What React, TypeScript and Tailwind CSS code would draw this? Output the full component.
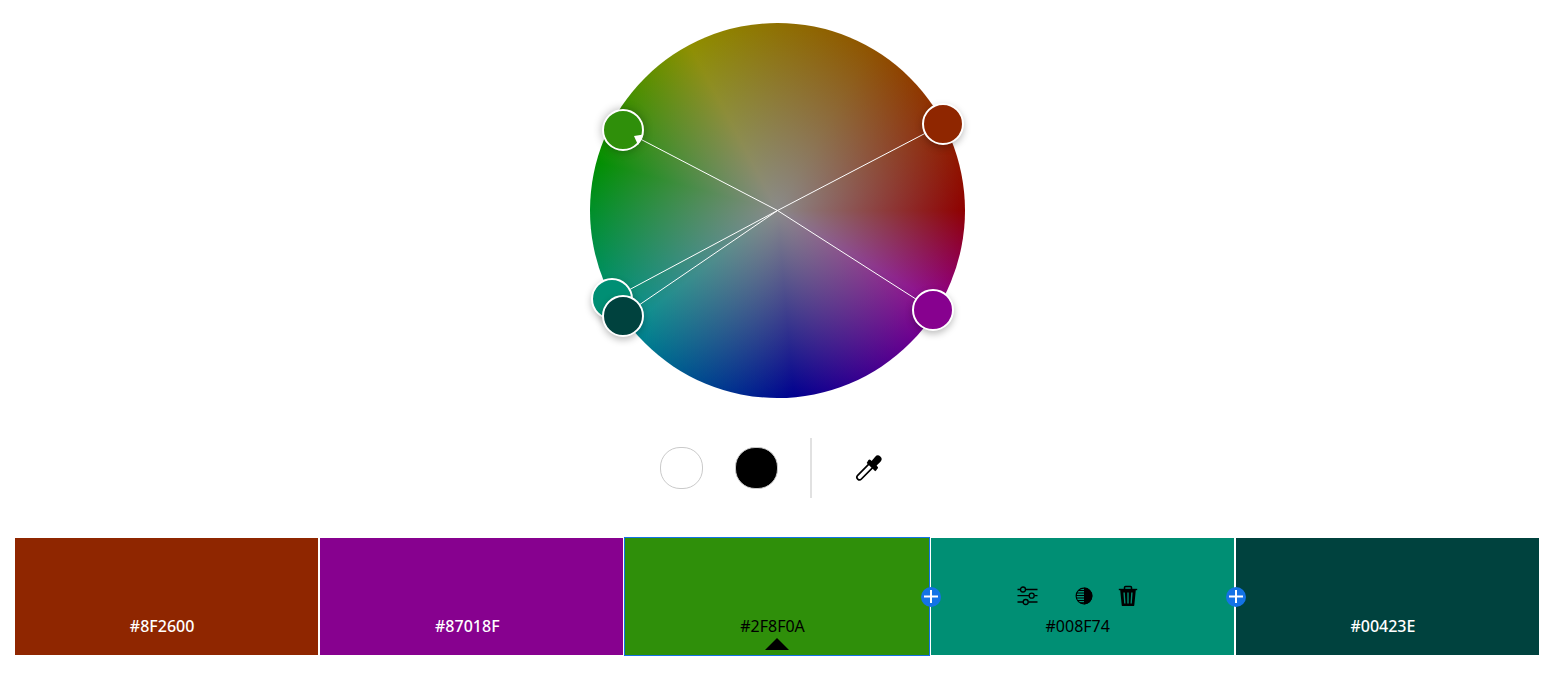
import React, { useState } from "react";

type Marker = {
  hex: string;
  name: string;
  x: number;
  y: number;
};

const WHEEL = 375;
const CENTER = WHEEL / 2;

const markers: Marker[] = [
  { hex: "#8F2600", name: "Rust", x: 353, y: 101 },
  { hex: "#87018F", name: "Purple", x: 343, y: 287 },
  { hex: "#2F8F0A", name: "Green", x: 33, y: 107 },
  { hex: "#008F74", name: "Teal", x: 22, y: 276 },
  { hex: "#00423E", name: "Dark teal", x: 33, y: 293 },
];

function EyedropperIcon() {
  return (
    <svg width="28" height="28" viewBox="0 0 28 28" aria-hidden="true">
      <path
        d="M14.8 9.2 2.7 21.400a2.500 2.500 0 0 0 3.700 3.600L18.400 12.900"
        fill="none"
        stroke="#000"
        strokeWidth="1.7"
        strokeLinejoin="round"
      />
      <path
        d="M13.300 6.200a1.600 1.600 0 0 1 2.300-.3l1 1 3.600-4.200a3.500 3.500 0 0 1 5.300 5L21.600 11.400l1.200 1.600c.8 1-.3 2-1 2.100l.1.700-1.700 1.500-8.500-8.400z"
        fill="#000"
      />
    </svg>
  );
}

function SlidersIcon() {
  return (
    <svg width="22" height="22" viewBox="0 0 22 22" fill="none" stroke="#000" strokeWidth="1.3" aria-hidden="true">
      <path d="M.5 4.500h3M8.500 4.500h12M.5 10.700h11.500M17.500 10.700h3M.5 17h5.500M11.500 17h9" />
      <circle cx="6" cy="4.500" r="2.500" />
      <circle cx="14.700" cy="10.700" r="2.500" />
      <circle cx="8.700" cy="17" r="2.500" />
    </svg>
  );
}

function ShadesIcon() {
  return (
    <svg width="18" height="18" viewBox="0 0 18 18" aria-hidden="true">
      <circle cx="9" cy="9" r="7.9" fill="none" stroke="#000" strokeWidth="1.1" />
      <path d="M9 .6a8.4 8.4 0 0 1 0 16.8z" fill="#000" />
      <path d="M3.5 3.5H9M2 6h7M1 8.5h8M1.2 11H9M2.5 13.5H9M5 15.7h4" stroke="#000" strokeWidth="1" />
    </svg>
  );
}

function TrashIcon() {
  return (
    <svg width="20" height="22" viewBox="0 0 20 22" aria-hidden="true">
      <path d="M6.5 4V2.4c0-.6.4-1 1-1h5c.6 0 1 .4 1 1V4" fill="none" stroke="#000" strokeWidth="1.5" />
      <path d="M.8 3.8h18.4v1.4H.8z" fill="#000" />
      <path
        fillRule="evenodd"
        d="M2.2 5h15.6l-1.5 15.2c-.1.6-.4.9-1 .9H4.7c-.6 0-.9-.3-1-.9zM5.4 7.500l.8 11h1.300l-.7-11zM9.300 7.500v11h1.400v-11zM13.200 7.500l-.7 11h1.300l.8-11z"
        fill="#000"
      />
    </svg>
  );
}

function ColorWheel({ selected, onSelect }: { selected: number; onSelect: (i: number) => void }) {
  return (
    <div className="relative size-[375px] shrink-0">
      <div className="size-full rounded-full bg-[radial-gradient(closest-side,#8a8a8a,rgba(143,143,143,0)),conic-gradient(#8f7000_0deg,#8f5300_30deg,#8f0000_90deg,#8f008f_120deg,#00008f_175deg,#008f8f_232deg,#008f00_285deg,#8f8f00_332deg,#8f7000_360deg)]" />
      <svg className="absolute inset-0" viewBox="0 0 375 375" aria-hidden="true">
        {markers.map((m) => (
          <line key={m.hex} x1={CENTER} y1={CENTER} x2={m.x} y2={m.y} stroke="#fff" strokeWidth="1" />
        ))}
      </svg>
      {markers.map((m, i) => (
        <button
          key={m.hex}
          type="button"
          aria-label={`${m.name} ${m.hex}`}
          onClick={() => onSelect(i)}
          className={`absolute size-[42px] -translate-x-1/2 -translate-y-1/2 rounded-full border-2 border-white ${
            i === selected ? "shadow-[0_0_10px_rgba(0,0,0,0.3)]" : "shadow-[0_3px_7px_rgba(0,0,0,0.25)]"
          }`}
          style={{ left: m.x, top: m.y, backgroundColor: m.hex }}
        >
          {i === selected && (
            <svg className="absolute -inset-[2px]" viewBox="0 0 42 42" aria-hidden="true">
              <path d="M32 27 41.500 25.500 36 36z" fill="#fff" />
            </svg>
          )}
        </button>
      ))}
    </div>
  );
}

function AddButton() {
  return (
    <button
      type="button"
      aria-label="Add color"
      className="absolute top-[49px] -left-[10px] z-10 flex size-5 items-center justify-center rounded-full bg-[#1473e6]"
    >
      <svg width="14" height="14" viewBox="0 0 14 14" aria-hidden="true">
        <path d="M7 0v13M0 6.500h14" stroke="#fff" strokeWidth="2" />
      </svg>
    </button>
  );
}

function Swatch({ hex, index, selected }: { hex: string; index: number; selected: boolean }) {
  const dark = index === 2 || index === 3;
  return (
    <li
      className={`relative flex h-[117px] min-w-0 flex-1 flex-col items-center pt-[46px] ${
        selected ? "outline outline-1 outline-[#1473e6]" : ""
      }`}
      style={{ backgroundColor: hex }}
    >
      {index > 2 && <AddButton />}
      <div className="flex h-6 items-center pr-[9px]">
        {index === 3 && (
          <>
            <button type="button" aria-label="Edit color" className="flex size-6 items-center justify-center">
              <SlidersIcon />
            </button>
            <button type="button" aria-label="View shades" className="ml-8 flex size-6 items-center justify-center">
              <ShadesIcon />
            </button>
            <button type="button" aria-label="Delete color" className="ml-5 flex size-6 items-center justify-center">
              <TrashIcon />
            </button>
          </>
        )}
      </div>
      <span
        className={`mt-[6px] pr-[9px] font-['Noto_Sans',sans-serif] text-base leading-6 ${
          dark ? "font-normal text-black" : "font-medium text-white"
        }`}
      >
        {hex}
      </span>
      {selected && (
        <svg width="24" height="12" viewBox="0 0 24 12" aria-hidden="true">
          <path d="M12 0 24 12H0z" fill="#000" />
        </svg>
      )}
    </li>
  );
}

export default function App() {
  const [selected, setSelected] = useState(2);

  return (
    <main className="flex min-h-screen flex-col items-center bg-white pt-[23px] pr-[17px] pb-6 pl-[15px]">
      <ColorWheel selected={selected} onSelect={setSelected} />

      <div className="mt-10 flex h-[60px] items-center gap-8">
        <button
          type="button"
          aria-label="White background"
          className="h-[42px] w-[43px] rounded-[20px] border border-[#cacaca] bg-white"
        />
        <button
          type="button"
          aria-label="Black background"
          className="h-[42px] w-[43px] rounded-[20px] border border-[#cacaca] bg-black"
        />
        <div className="h-full w-[2px] bg-[#e1e1e1]" />
        <button type="button" aria-label="Pick color" className="flex h-10 w-[50px] items-center justify-center">
          <EyedropperIcon />
        </button>
      </div>

      <ul className="mt-10 flex w-full gap-[2px]">
        {markers.map((m, i) => (
          <Swatch key={m.hex} hex={m.hex} index={i} selected={i === selected} />
        ))}
      </ul>
    </main>
  );
}
